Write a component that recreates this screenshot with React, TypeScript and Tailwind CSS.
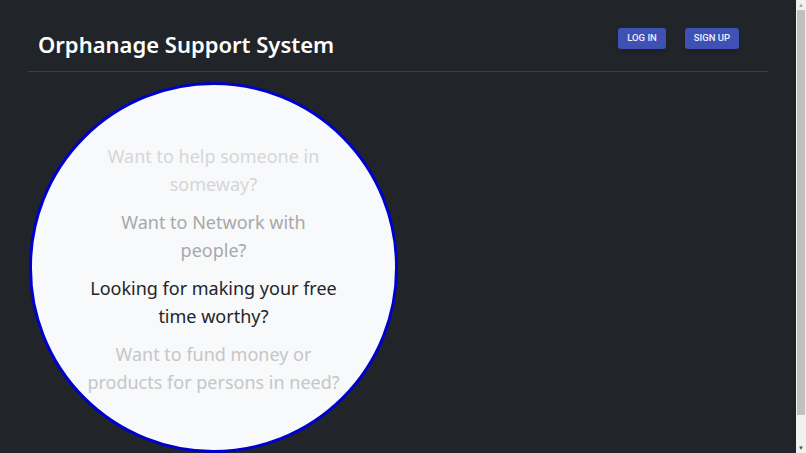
const LINES = [
  { text: 'Want to help someone in someway?', color: 'text-[#d6d6d6]' },
  { text: 'Want to Network with people?', color: 'text-[#a8a8a8]' },
  { text: 'Looking for making your free time worthy?', color: 'text-[#212529]' },
  { text: 'Want to fund money or products for persons in need?', color: 'text-[#c6c6c6]' },
]

function Header() {
  return (
    <header className="mx-[28px] flex h-[72px] items-start justify-between border-b border-[#3c3f44] pl-[10px] pr-[29px] pt-[27px]">
      <h1 className="font-['Noto_Sans',sans-serif] text-[22px] font-semibold leading-[34px] text-white">
        Orphanage Support System
      </h1>
      <div className="mt-[1px] flex gap-[19px] font-['Roboto',sans-serif] text-[9.5px] font-medium text-[#eef0fb]">
        <button className="h-[21px] w-[48px] rounded-[3px] bg-[#3f51b5] shadow-md">LOG IN</button>
        <button className="h-[21px] w-[54px] rounded-[3px] bg-[#3f51b5] shadow-md">SIGN UP</button>
      </div>
    </header>
  )
}

function Scrollbar() {
  return (
    <div className="flex w-[10px] shrink-0 flex-col bg-[#f1f1f1]">
      <div className="flex h-[10px] items-center justify-center text-[6px] leading-none text-[#a3a3a3]">▲</div>
      <div className="mx-[1px] h-[405px] bg-[#c1c1c1]" />
      <div className="flex-1" />
      <div className="flex h-[10px] items-center justify-center text-[6px] leading-none text-[#505050]">▼</div>
    </div>
  )
}

export default function App() {
  return (
    <div className="flex h-screen overflow-hidden bg-[#212529]">
      <div className="flex-1 overflow-hidden">
        <Header />
        <main className="pl-[29px] pt-[10px]">
          <div className="flex h-[371px] w-[369px] items-center justify-center rounded-full border-[3px] border-[#0000cd] bg-[#f8f9fa]">
            <div className="mt-[2px] flex w-[253px] flex-col gap-[10px] text-center font-['Noto_Sans',sans-serif] text-[18px] leading-[28px]">
              {LINES.map((l) => (
                <p key={l.text} className={l.color}>
                  {l.text}
                </p>
              ))}
            </div>
          </div>
        </main>
      </div>
      <Scrollbar />
    </div>
  )
}
